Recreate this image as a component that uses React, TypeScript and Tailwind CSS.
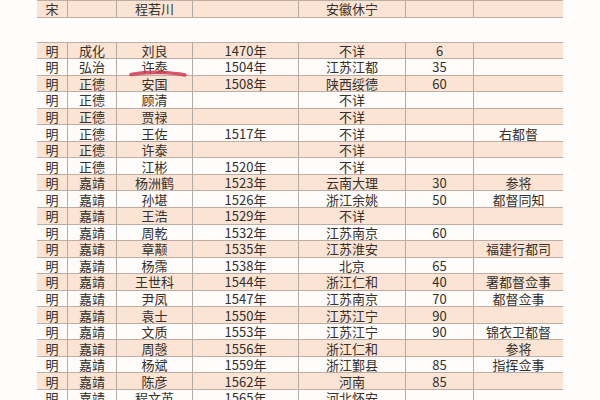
type Row = [string, string, string, string, string, string, string];

const rows: Row[] = [
  ['明', '成化', '刘良', '1470年', '不详', '6', ''],
  ['明', '弘治', '许泰', '1504年', '江苏江都', '35', ''],
  ['明', '正德', '安国', '1508年', '陕西绥德', '60', ''],
  ['明', '正德', '顾清', '', '不详', '', ''],
  ['明', '正德', '贾禄', '', '不详', '', ''],
  ['明', '正德', '王佐', '1517年', '不详', '', '右都督'],
  ['明', '正德', '许泰', '', '不详', '', ''],
  ['明', '正德', '江彬', '1520年', '不详', '', ''],
  ['明', '嘉靖', '杨洲鹤', '1523年', '云南大理', '30', '参将'],
  ['明', '嘉靖', '孙堪', '1526年', '浙江余姚', '50', '都督同知'],
  ['明', '嘉靖', '王浩', '1529年', '不详', '', ''],
  ['明', '嘉靖', '周乾', '1532年', '江苏南京', '60', ''],
  ['明', '嘉靖', '章颟', '1535年', '江苏淮安', '', '福建行都司'],
  ['明', '嘉靖', '杨霈', '1538年', '北京', '65', ''],
  ['明', '嘉靖', '王世科', '1544年', '浙江仁和', '40', '署都督佥事'],
  ['明', '嘉靖', '尹凤', '1547年', '江苏南京', '70', '都督佥事'],
  ['明', '嘉靖', '袁士', '1550年', '江苏江宁', '90', ''],
  ['明', '嘉靖', '文质', '1553年', '江苏江宁', '90', '锦衣卫都督'],
  ['明', '嘉靖', '周愨', '1556年', '浙江仁和', '', '参将'],
  ['明', '嘉靖', '杨斌', '1559年', '浙江鄞县', '85', '指挥佥事'],
  ['明', '嘉靖', '陈彦', '1562年', '河南', '85', ''],
  ['明', '嘉靖', '程文英', '1565年', '河北怀安', '', ''],
];

const gridCols = 'grid grid-cols-[31px_49px_76px_106px_107px_68px_89px]';

const SheetRow = ({ cells, shaded }: { cells: Row; shaded: boolean }) => (
  <div
    className={`${gridCols} h-[16.55px] shrink-0 border-b border-[#bcaea3] ${
      shaded ? 'bg-[#fbe4d3]' : 'bg-[#fefcfa]'
    }`}
  >
    {cells.map((c, i) => (
      <div
        key={i}
        className={`flex items-center justify-center leading-none ${
          i < 6 ? 'border-r border-[#b3aaa3]' : ''
        }`}
      >
        {c}
      </div>
    ))}
  </div>
);

export default function App() {
  return (
    <div
      className="relative h-[400px] w-[600px] overflow-hidden bg-[#fefdfc] text-[13px] text-[#34302c]"
      style={{ fontFamily: '"Noto Sans CJK SC", "Noto Sans", sans-serif' }}
    >
      <div className="ml-[37px] flex w-[526px] flex-col">
        <div className="border-t border-[#bcaea3]">
          <SheetRow cells={['宋', '', '程若川', '', '安徽休宁', '', '']} shaded />
        </div>
        <div className="h-[24px] shrink-0" />
        <div className="border-t border-[#bcaea3]">
          {rows.map((r, i) => (
            <SheetRow key={i} cells={r} shaded={i % 2 === 0} />
          ))}
        </div>
      </div>

      {/* red pen mark under 许泰 */}
      <svg className="absolute left-[128px] top-[69px]" width="60" height="10" viewBox="0 0 60 10">
        <path
          d="M3 5.5 Q 18 3 32 3.5 Q 47 4 57 6"
          fill="none"
          stroke="#d0384f"
          strokeWidth="3.6"
          strokeLinecap="round"
          opacity="0.85"
        />
      </svg>
    </div>
  );
}
